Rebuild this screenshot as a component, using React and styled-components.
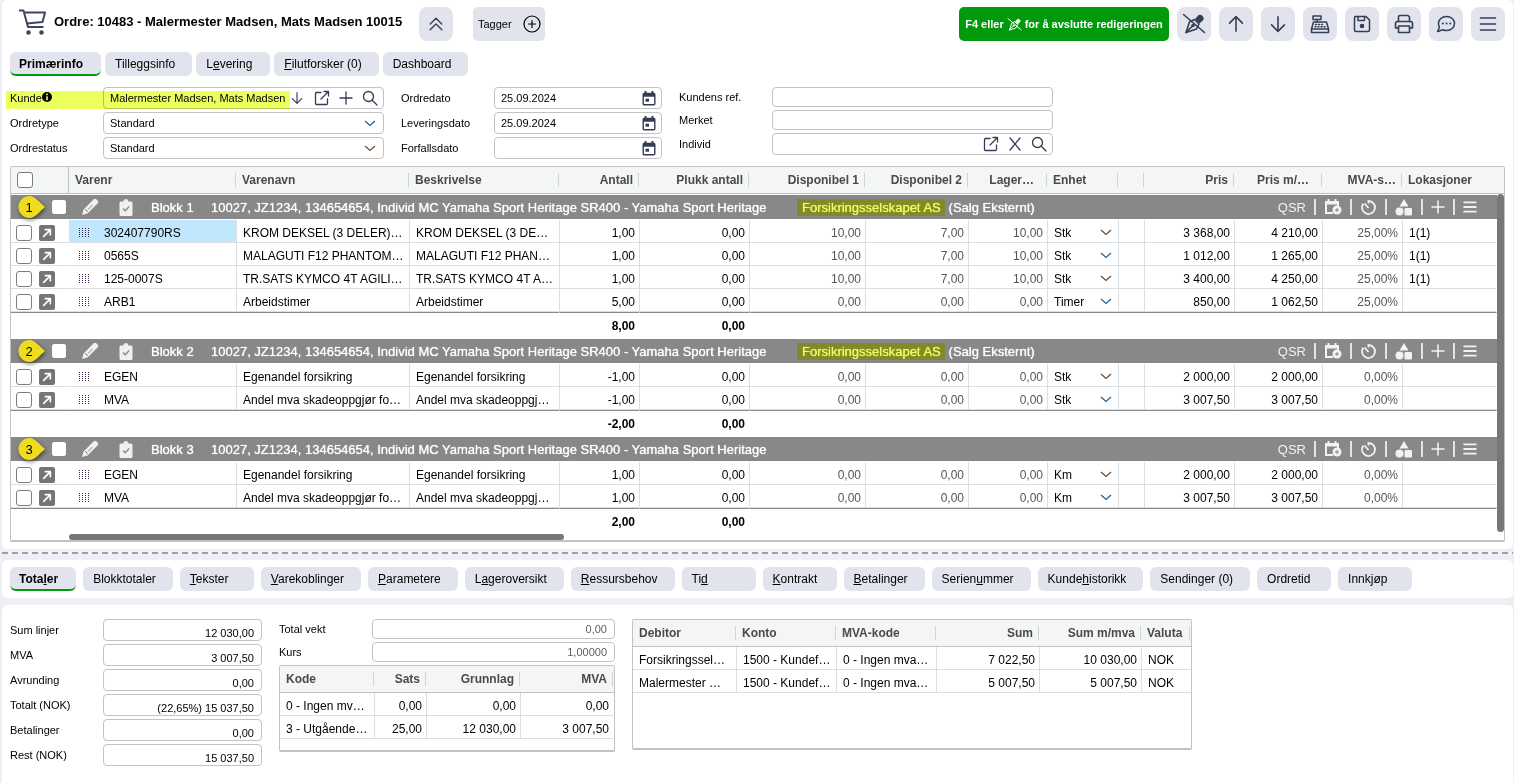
import React from "react";
import styled, { createGlobalStyle, css } from "styled-components";

const GlobalStyle = createGlobalStyle`
  * {
    box-sizing: border-box;
  }
  body {
    margin: 0;
    background: #eeeff4;
    color: #000;
    font-family: "Liberation Sans", Arial, sans-serif;
    font-size: 12px;
  }
  button, input, select {
    font-family: inherit;
    color: inherit;
  }
`;

const Page = styled.div`
  display: flex;
  flex-direction: column;
  min-height: 100vh;
  padding: 0 1px 0 2px;
`;

const Card = styled.section`
  background: #fff;
  border-radius: ${({ $last }) => ($last ? "5px 5px 0 0" : "5px")};
  padding: 7px 8px;
  ${({ $last }) =>
    $last &&
    css`
      flex: 1;
      margin-top: 7px;
      padding-top: 14px;
    `}
`;

const Splitter = styled.div`
  height: 2px;
  margin: 3px 0 6px;
  background: repeating-linear-gradient(
    90deg,
    #a0a0a4 0 6px,
    transparent 6px 10px
  );
`;

const Header = styled.header`
  display: flex;
  align-items: center;
  height: 34px;
`;

const CartBox = styled.span`
  display: flex;
  width: 44px;
  padding: 0 0 4px 9px;
`;

const Title = styled.h1`
  min-width: 359px;
  margin: 0 6px 4px 0;
  font-size: 13px;
  line-height: 16px;
  white-space: nowrap;
`;

const ToolButton = styled.button`
  display: flex;
  align-items: center;
  justify-content: center;
  width: 34px;
  height: 34px;
  padding: 0;
  border: 0;
  border-radius: 8px;
  background: #e1e4ec;
  color: #343d55;
  cursor: pointer;
`;

const TagButton = styled(ToolButton)`
  justify-content: space-between;
  width: 72px;
  margin-left: 20px;
  padding: 0 4px 0 5px;
  border-radius: 5px;
  font-size: 11px;
  color: #000;
`;

const Tools = styled.div`
  display: flex;
  gap: 8px;
  margin-left: auto;
`;

const EditBanner = styled.button`
  display: flex;
  align-items: center;
  justify-content: center;
  gap: 3px;
  min-width: 210px;
  height: 34px;
  padding: 0 5px;
  border: 0;
  border-radius: 5px;
  background: #009a0c;
  color: #fff;
  font-size: 11px;
  font-weight: bold;
  white-space: nowrap;
`;

const Tabs = styled.nav`
  display: flex;
  gap: ${({ $wide }) => ($wide ? "7px" : "4px")};
  ${({ $wide }) => !$wide && "margin: 11px 0;"}
`;

const Tab = styled.button`
  min-width: 74px;
  height: 24px;
  padding: 0 17px 0 10px;
  border: 0;
  border-radius: 6px;
  background: #e1e4ec;
  font-size: 12px;
  text-align: left;
  white-space: nowrap;
  ${({ $active }) =>
    $active &&
    css`
      min-width: 66px;
      padding: 2px 18px 0 9px;
      border-bottom: 2px solid #009a0c;
      font-weight: bold;
    `}
`;

const Form = styled.div`
  display: flex;
  gap: 17px;
  margin-bottom: 7px;
`;

const FormColumn = styled.div`
  display: flex;
  flex-direction: column;
  gap: 3px;
  width: ${({ $width }) => $width}px;
`;

const Row = styled.div`
  position: relative;
  display: flex;
  align-items: center;
`;

const Label = styled.label`
  flex: 0 0 93px;
  font-size: 11px;
  line-height: 14px;
  white-space: nowrap;
`;

const Field = styled.div`
  display: flex;
  flex: 1;
  align-items: center;
  min-width: 0;
  height: ${({ $low }) => ($low ? "20px" : "22px")};
  padding: 0 ${({ $number }) => ($number ? "7px" : "5px")} 0 6px;
  border: 1px solid #c3c3c3;
  border-radius: 4px;
  color: #343d55;
  background: #fff;
`;

const Input = styled.input`
  flex: 1;
  min-width: 0;
  height: 18px;
  padding: 0;
  border: 0;
  background: none;
  color: ${({ $muted }) => ($muted ? "#606060" : "#000")};
  font-size: 11px;
  text-align: ${({ $right }) => ($right ? "right" : "left")};
  outline: none;
  ${({ $sunk }) => $sunk && "padding-top: 6px;"}
`;

const Select = styled.select`
  flex: 1;
  min-width: 0;
  height: ${({ $cell }) => ($cell ? "16px" : "18px")};
  padding: 0;
  border: 0;
  appearance: none;
  background: none;
  color: #000;
  font-size: ${({ $cell }) => ($cell ? "12px" : "11px")};
  outline: none;
`;

const IconButton = styled.button`
  display: flex;
  padding: 0;
  border: 0;
  background: none;
  color: inherit;
`;

/* yellow marker pen over the customer row */
const Marker = styled.span`
  position: absolute;
  top: 4px;
  left: -4px;
  width: 284px;
  height: 18px;
  background: #ecff5c;
  mix-blend-mode: multiply;
  pointer-events: none;
`;

const InfoIcon = styled.svg`
  margin-bottom: 3px;
  vertical-align: middle;
`;

const Grid = styled.div`
  border: 1px solid #bdc3c7;
  border-bottom-width: 2px;
  border-radius: 2px;
  ${({ $height }) => $height && `height: ${$height}px;`}
  ${({ $width }) => $width && `width: ${$width}px;`}
`;

const GridBody = styled.div`
  display: flex;
`;

const Table = styled.table`
  flex: 1;
  width: 100%;
  min-width: 0;
  table-layout: fixed;
  border-collapse: separate;
  border-spacing: 0;
`;

const Th = styled.th`
  height: 27px;
  padding: 0;
  border-bottom: 1px solid #bdc3c7;
  background: #f4f6f6;
  color: #4a4a4a;
  font-size: 12px;
  text-align: ${({ $right }) => ($right ? "right" : "left")};
  ${({ $check }) => $check && "border-right: 1px solid #bdc3c7;"}
`;

const HeadText = styled.span`
  display: block;
  height: 14px;
  margin-right: 1px;
  padding: 0 ${({ $cut }) => ($cut ? "12px" : "5px")} 0
    ${({ $first }) => ($first ? "6px" : "5px")};
  border-right: 1px solid ${({ $end }) => ($end ? "transparent" : "#cfd4d7")};
  line-height: 14px;
  white-space: nowrap;
`;

const Td = styled.td`
  height: 23px;
  padding: 3px 4px 0 6px;
  border-right: 1px solid ${({ $plain }) => ($plain ? "transparent" : "#dcdfe2")};
  border-bottom: 1px solid #dcdfe2;
  background: ${({ $picked }) => ($picked ? "#c1e7ff" : "#fff")};
  color: ${({ $muted }) => ($muted ? "#555" : "#000")};
  font-size: 12px;
  line-height: 14px;
  text-align: ${({ $right }) => ($right ? "right" : "left")};
  white-space: nowrap;
  overflow: hidden;
`;

const CheckTd = styled(Td)`
  padding-left: 5px;
`;

const SumTd = styled.td`
  height: 26px;
  padding: 0 4px;
  border-top: 1px solid #8a8a8a;
  border-right: 1px solid transparent;
  font-weight: bold;
  text-align: right;
`;

const CellFlex = styled.div`
  display: flex;
  align-items: center;
  gap: ${({ $gap }) => $gap}px;
  padding: ${({ $pad }) => $pad || "0"};
`;

const CheckBox = styled.input`
  flex: none;
  width: ${({ $block }) => ($block ? "14px" : "16px")};
  height: ${({ $block }) => ($block ? "14px" : "16px")};
  margin: 0;
  border: 1px solid ${({ $block }) => ($block ? "#fff" : "#777d80")};
  border-radius: ${({ $block }) => ($block ? "2px" : "3px")};
  appearance: none;
  background: #fff;
`;

const OpenButton = styled.button`
  display: flex;
  align-items: center;
  justify-content: center;
  width: 16px;
  height: 16px;
  padding: 0;
  border: 0;
  border-radius: 2px;
  background: #757575;
  color: #fff;
`;

const BlockTd = styled.td`
  padding: 1px 0;
`;

const BlockBar = styled.div`
  display: flex;
  align-items: center;
  height: 24px;
  padding: 0 20px 0 6px;
  background: #888;
  color: #fff;
  font-size: 13px;
  white-space: nowrap;
`;

const BlockLead = styled.div`
  display: flex;
  align-items: center;
  width: 134px;
`;

const PinBox = styled.svg`
  flex: none;
  margin-right: 7px;
  overflow: visible;
`;

const PenSpace = styled.span`
  display: flex;
  margin: 0 20px 0 15px;
`;

const BlockText = styled.span`
  min-width: ${({ $width }) => $width}px;
  text-shadow: 0 0 1px #fff;
`;

const Highlight = styled.mark`
  min-width: 148px;
  margin-left: 11px;
  padding: 1px 0 1px 5px;
  background: #7f8a2b;
  color: #ecff5c;
  text-shadow: 0 0 1px #ecff5c;
`;

const BlockTools = styled.div`
  display: flex;
  align-items: center;
  gap: 8px;
  margin-left: auto;
  color: #f2f2f2;
`;

const Bar = styled.span`
  width: 2px;
  height: 16px;
  background: #e4e4e4;
`;

const ScrollColumn = styled.div`
  display: flex;
  flex-direction: column;
  width: 7px;
`;

const ScrollCorner = styled.div`
  height: 27px;
  border-bottom: 1px solid #bdc3c7;
  background: #f4f6f6;
`;

const ScrollThumb = styled.div`
  border-radius: 4px;
  background: #777;
  ${({ $across }) =>
    $across
      ? css`
          width: 495px;
          height: 6px;
          margin-left: 58px;
        `
      : css`
          flex: 1;
          margin-bottom: 2px;
        `}
`;

const Totals = styled.div`
  display: flex;
  align-items: flex-start;
  gap: 17px;
`;

const Icon = ({ size = 20, box = 24, width = 2, children }) => (
  <svg
    width={size}
    height={size}
    viewBox={`0 0 ${box} ${box}`}
    fill="none"
    stroke="currentColor"
    strokeWidth={width}
    strokeLinecap="round"
    strokeLinejoin="round"
    aria-hidden="true"
  >
    {children}
  </svg>
);

const CartIcon = () => (
  <svg width="28" height="26" viewBox="0 0 28 26" fill="none" stroke="#3d465c" strokeWidth="2" strokeLinejoin="round" aria-hidden="true">
    <path d="M0 1.5h4.500l4.500 16.500h15.500" />
    <path d="M5.500 3.500h20.500l-2.500 9.500-15.500 1.500" />
    <circle cx="9.500" cy="23.500" r="1.300" fill="#3d465c" />
    <circle cx="22.500" cy="23.500" r="1.300" fill="#3d465c" />
  </svg>
);

const PenSlash = ({ size = 24 }) => (
  <Icon size={size} width={1.6}>
    <path d="M4 20.500 7.500 10l5-2.500 4.500 4.500-2.500 5Z" />
    <path d="m4 20.500 6.500-6.500" />
    <circle cx="11" cy="13.500" r="1" fill="currentColor" />
    <path d="m14 7 3-3.200c2-1 4.700 1.700 3.700 3.700L17.500 10.500Z" fill="currentColor" />
    <path d="M1.500 2.500 22.500 20.500" />
  </Icon>
);

const ArrowIcon = ({ down, size = 22 }) => (
  <Icon size={size} width={1.7}>
    {down ? <path d="M12 4v16M5 13l7 7 7-7" /> : <path d="M12 20V4M5 11l7-7 7 7" />}
  </Icon>
);

const RegisterIcon = () => (
  <Icon size={20} box={20} width={1.5}>
    <path d="M3 2h8v3.500H3zM7 5.500V8" />
    <path d="M3.500 8h13l2 7H1.500zM1.500 15h17v3.500h-17z" />
    <path d="M5.500 10.500h9M5 12.800h10" strokeDasharray="1 2" />
  </Icon>
);

const SaveIcon = () => (
  <Icon size={18} box={18} width={1.5}>
    <path d="M2.500 1.500h10.500l3.500 3.500v10a1.500 1.500 0 0 1-1.500 1.500H3A1.500 1.500 0 0 1 1.500 15V3a1.500 1.500 0 0 1 1-1.500Z" />
    <path d="M5 1.500v4h6.500v-4" />
    <circle cx="9" cy="11" r="1.600" fill="currentColor" />
  </Icon>
);

const PrintIcon = () => (
  <Icon size={20} box={20} width={1.6}>
    <path d="M4.500 7.500V3A1.500 1.500 0 0 1 6 1.500h8L15.500 3v4.500" />
    <path d="M4.500 14H1.500v-4.500a2 2 0 0 1 2-2h13a2 2 0 0 1 2 2V14h-3" />
    <path d="M4.500 12h11v6.500h-11z" />
  </Icon>
);

const ChatIcon = () => (
  <Icon size={20} box={20} width={1.5}>
    <path d="M10.500 2.500c4.600 0 8 3 8 7s-3.400 7-8 7c-1.300 0-2.600-.3-3.700-.8L1.500 17.500l2-4.200A6.600 6.600 0 0 1 2.500 9.500c0-4 3.400-7 8-7Z" />
    <path d="M6.800 9.500h.1M10.500 9.500h.1M14.200 9.500h.1" strokeWidth="2" />
  </Icon>
);

const MenuIcon = ({ size = 18, width = 2 }) => (
  <Icon size={size} box={18} width={width}>
    <path d="M1.500 3h15M1.500 9h15M1.500 15h15" />
  </Icon>
);

const OpenIcon = () => (
  <Icon size={16} box={16} width={1.3}>
    <path d="M7 2.500H2.500A1 1 0 0 0 1.500 3.500v10a1 1 0 0 0 1 1h10a1 1 0 0 0 1-1V9M10 1.500h4.500V6M14.500 1.500 7 9" />
  </Icon>
);

const PlusIcon = ({ size = 14, width = 1.3 }) => (
  <Icon size={size} box={14} width={width}>
    <path d="M7 1v12M1 7h12" />
  </Icon>
);

const CrossIcon = () => (
  <Icon size={14} box={14} width={1.3}>
    <path d="m2 1 10 12M12 1 2 13" />
  </Icon>
);

const SearchIcon = () => (
  <Icon size={16} box={16} width={1.3}>
    <circle cx="6.500" cy="6.500" r="5" />
    <path d="m10.500 10.500 4.500 4.500" />
  </Icon>
);

const CalendarIcon = () => (
  <svg width="14" height="15" viewBox="0 0 14 15" fill="none" stroke="currentColor" aria-hidden="true">
    <path d="M3.500 0v3M10.500 0v3" strokeWidth="2" />
    <rect x="1.200" y="2.500" width="11.600" height="11.300" rx="1" strokeWidth="1.400" />
    <path d="M1 4h12" strokeWidth="3.500" />
    <path d="M3.500 9.200h3.500" strokeWidth="3" />
  </svg>
);

const Chevron = ({ color = "#2b5876" }) => (
  <svg width="12" height="7" viewBox="0 0 12 7" fill="none" stroke={color} strokeWidth="1.200" aria-hidden="true">
    <path d="m1 1 5 4.500 5-4.500" />
  </svg>
);

const DragDots = () => (
  <svg width="12" height="9" viewBox="0 0 12 9" stroke="#3c2350" strokeWidth="1" strokeDasharray="1 1" aria-hidden="true">
    <path d="M1.500 0v9M4.500 0v9M7.500 0v9M10.500 0v9" />
  </svg>
);

const Pin = ({ number }) => (
  <PinBox width="28" height="24" viewBox="0 0 28 24">
    <path
      d="M28 12C22 17 18 23 12.500 23a11 11 0 1 1 0-22C18 1 22 7 28 12Z"
      fill="#f0dc1e"
      style={{ filter: "drop-shadow(1px 2px 2px rgba(0, 0, 0, 0.5))" }}
    />
    <text x="12" y="17" fontSize="13" textAnchor="middle" fill="#000">
      {number}
    </text>
  </PinBox>
);

const BlockPen = () => (
  <svg width="18" height="18" viewBox="0 0 18 18" aria-hidden="true">
    <path d="M1 17 2.500 11.500 12.500 1.500a2 2 0 0 1 3 0l1 1a2 2 0 0 1 0 3L6.500 15.500Z" fill="#f0f0f0" />
    <path d="m7 11.500 4.500-4.500M4 11l3 3" stroke="#888" fill="none" />
  </svg>
);

const ClipboardIcon = () => (
  <svg width="14" height="17" viewBox="0 0 14 17" aria-hidden="true">
    <path d="M2 2.500h2.500a2.500 2.500 0 0 1 5 0H12A1.500 1.500 0 0 1 13.500 4v11.500A1.500 1.500 0 0 1 12 17H2A1.500 1.500 0 0 1 .5 15.500V4A1.500 1.500 0 0 1 2 2.500Z" fill="#f0f0f0" />
    <path d="m4 9.500 2.200 2.200L10.200 7.500" stroke="#888" strokeWidth="1.300" fill="none" />
  </svg>
);

const PlanIcon = () => (
  <svg width="18" height="16" viewBox="0 0 18 16" fill="none" stroke="currentColor" aria-hidden="true">
    <path d="M4.500 0v4M11.500 0v4" strokeWidth="2" />
    <path d="M9 14H2V3h12v4" strokeWidth="2" />
    <path d="M1.500 4h13" strokeWidth="3" />
    <circle cx="13" cy="11" r="4.500" fill="currentColor" stroke="none" />
    <path d="M13 9v4M11 11h4" stroke="#888" />
  </svg>
);

const TimerIcon = () => (
  <svg width="17" height="17" viewBox="0 0 17 17" fill="none" stroke="currentColor" strokeWidth="1.800" aria-hidden="true">
    <path d="M8.500 4.500V2a6.500 6.500 0 1 1-5.200 2.600" />
    <path d="m4.500 4.500 4 4.500" />
  </svg>
);

const ShapesIcon = () => (
  <svg width="18" height="17" viewBox="0 0 18 17" fill="currentColor" aria-hidden="true">
    <path d="m9 0 4.500 7.500h-9Z" />
    <circle cx="4.500" cy="12.500" r="4" />
    <rect x="9.500" y="9" width="7.500" height="7.500" rx="1" />
  </svg>
);

const mainTabs = [
  ["Primærinfo", ""],
  ["Tilleggsinfo", "g", 6],
  ["Levering", "e", 1],
  ["Filutforsker (0)", "F", 0],
  ["Dashboard", ""],
];

const bottomTabs = [
  ["Totaler", "l", 4],
  ["Blokktotaler", ""],
  ["Tekster", "T", 0],
  ["Varekoblinger", "V", 0],
  ["Parametere", "P", 0],
  ["Lageroversikt", "a", 1],
  ["Ressursbehov", "R", 0],
  ["Tid", "d", 2],
  ["Kontrakt", "K", 0],
  ["Betalinger", "B", 0],
  ["Serienummer", "u", 6],
  ["Kundehistorikk", "h", 5],
  ["Sendinger (0)", ""],
  ["Ordretid", ""],
  ["Innkjøp", ""],
];

const columns = [
  { label: "Varenr", width: 168 },
  { label: "Varenavn", width: 173 },
  { label: "Beskrivelse", width: 150 },
  { label: "Antall", width: 80, right: true },
  { label: "Plukk antall", width: 110, right: true },
  { label: "Disponibel 1", width: 116, right: true },
  { label: "Disponibel 2", width: 103, right: true },
  { label: "Lager…", width: 79, right: true, cut: true },
  { label: "Enhet", width: 71 },
  { label: "", width: 26 },
  { label: "Pris", width: 90, right: true },
  { label: "Pris m/…", width: 88, right: true, cut: true },
  { label: "MVA-s…", width: 80, right: true },
  { label: "Lokasjoner", end: true },
];

const vehicle =
  "10027, JZ1234, 134654654, Individ MC Yamaha Sport Heritage SR400 - Yamaha Sport Heritage";

const blocks = [
  {
    insurer: "Forsikringsselskapet AS",
    sum: "8,00",
    rows: [
      ["302407790RS", "KROM DEKSEL (3 DELER)…", "KROM DEKSEL (3 DE…", "1,00", "0,00", "10,00", "7,00", "10,00", "Stk", "3 368,00", "4 210,00", "25,00%", "1(1)"],
      ["0565S", "MALAGUTI F12 PHANTOM…", "MALAGUTI F12 PHAN…", "1,00", "0,00", "10,00", "7,00", "10,00", "Stk", "1 012,00", "1 265,00", "25,00%", "1(1)"],
      ["125-0007S", "TR.SATS KYMCO 4T AGILI…", "TR.SATS KYMCO 4T A…", "1,00", "0,00", "10,00", "7,00", "10,00", "Stk", "3 400,00", "4 250,00", "25,00%", "1(1)"],
      ["ARB1", "Arbeidstimer", "Arbeidstimer", "5,00", "0,00", "0,00", "0,00", "0,00", "Timer", "850,00", "1 062,50", "25,00%", ""],
    ],
  },
  {
    insurer: "Forsikringsselskapet AS",
    sum: "-2,00",
    rows: [
      ["EGEN", "Egenandel forsikring", "Egenandel forsikring", "-1,00", "0,00", "0,00", "0,00", "0,00", "Stk", "2 000,00", "2 000,00", "0,00%", ""],
      ["MVA", "Andel mva skadeoppgjør fo…", "Andel mva skadeoppgj…", "-1,00", "0,00", "0,00", "0,00", "0,00", "Stk", "3 007,50", "3 007,50", "0,00%", ""],
    ],
  },
  {
    sum: "2,00",
    rows: [
      ["EGEN", "Egenandel forsikring", "Egenandel forsikring", "1,00", "0,00", "0,00", "0,00", "0,00", "Km", "2 000,00", "2 000,00", "0,00%", ""],
      ["MVA", "Andel mva skadeoppgjør fo…", "Andel mva skadeoppgj…", "1,00", "0,00", "0,00", "0,00", "0,00", "Km", "3 007,50", "3 007,50", "0,00%", ""],
    ],
  },
];

const sums = [
  ["Sum linjer", "12 030,00"],
  ["MVA", "3 007,50"],
  ["Avrunding", "0,00"],
  ["Totalt (NOK)", "(22,65%) 15 037,50"],
  ["Betalinger", "0,00"],
  ["Rest (NOK)", "15 037,50"],
];

const vatColumns = [
  { label: "Kode", width: 95 },
  { label: "Sats", width: 52, right: true },
  { label: "Grunnlag", width: 94, right: true },
  { label: "MVA", right: true },
];

const vatRows = [
  ["0 - Ingen mv…", "0,00", "0,00", "0,00"],
  ["3 - Utgående…", "25,00", "12 030,00", "3 007,50"],
];

const debtorColumns = [
  { label: "Debitor", width: 104 },
  { label: "Konto", width: 100 },
  { label: "MVA-kode", width: 100 },
  { label: "Sum", width: 103, right: true },
  { label: "Sum m/mva", width: 102, right: true },
  { label: "Valuta" },
];

const debtorRows = [
  ["Forsikringssel…", "1500 - Kundef…", "0 - Ingen mva…", "7 022,50", "10 030,00", "NOK"],
  ["Malermester …", "1500 - Kundef…", "0 - Ingen mva…", "5 007,50", "5 007,50", "NOK"],
];

const TabBar = ({ tabs, wide }) => (
  <Tabs $wide={wide}>
    {tabs.map(([name, key, at], i) => (
      <Tab key={name} type="button" $active={i === 0}>
        {key ? (
          <>
            {name.slice(0, at)}
            <u>{key}</u>
            {name.slice(at + 1)}
          </>
        ) : (
          name
        )}
      </Tab>
    ))}
  </Tabs>
);

const SelectRow = ({ id, label, color }) => (
  <Row>
    <Label htmlFor={id}>{label}</Label>
    <Field $number>
      <Select id={id} defaultValue="Standard">
        <option>Standard</option>
      </Select>
      <Chevron color={color} />
    </Field>
  </Row>
);

const DateRow = ({ id, label, value }) => (
  <Row>
    <Label htmlFor={id}>{label}</Label>
    <Field>
      <Input id={id} defaultValue={value} />
      <IconButton type="button" aria-label="Velg dato">
        <CalendarIcon />
      </IconButton>
    </Field>
  </Row>
);

const Heads = ({ items }) =>
  items.map(({ label, right, cut, end }, i) => (
    <Th key={i} $right={right}>
      <HeadText $cut={cut} $end={end} $first={i === 0}>
        {label}
      </HeadText>
    </Th>
  ));

const Cols = ({ items }) =>
  items.map(({ width }, i) => <col key={i} style={width && { width }} />);

const SmallTable = ({ items, rows, height, width }) => (
  <Grid $height={height} $width={width}>
    <Table>
      <colgroup>
        <Cols items={items} />
      </colgroup>
      <thead>
        <tr>
          <Heads items={items} />
        </tr>
      </thead>
      <tbody>
        {rows.map((row) => (
          <tr key={row[0]}>
            {row.map((value, i) => (
              <Td key={i} $right={items[i].right} $plain={i === row.length - 1}>
                {value}
              </Td>
            ))}
          </tr>
        ))}
      </tbody>
    </Table>
  </Grid>
);

const ItemRow = ({ row, picked, color }) => {
  const [nr, name, text, count, pick, free1, free2, stock, unit, price, gross, vat, place] = row;

  return (
    <tr>
      <CheckTd $plain>
        <CellFlex $gap={7}>
          <CheckBox type="checkbox" aria-label={`Velg ${nr}`} />
          <OpenButton type="button" aria-label={`Åpne ${nr}`}>
            <Icon size={10} box={12} width={2}>
              <path d="M2 10 9.500 2.500M4 2h6v6" />
            </Icon>
          </OpenButton>
        </CellFlex>
      </CheckTd>
      <Td $picked={picked}>
        <CellFlex $gap={14} $pad="0 0 0 3px">
          <DragDots />
          {nr}
        </CellFlex>
      </Td>
      <Td>{name}</Td>
      <Td>{text}</Td>
      <Td $right>{count}</Td>
      <Td $right>{pick}</Td>
      <Td $right $muted>{free1}</Td>
      <Td $right $muted>{free2}</Td>
      <Td $right $muted>{stock}</Td>
      <Td>
        <CellFlex $gap={4} $pad="0 2px 0 0">
          <Select $cell aria-label={`Enhet ${nr}`} defaultValue={unit}>
            <option>{unit}</option>
          </Select>
          <Chevron color={color} />
        </CellFlex>
      </Td>
      <Td />
      <Td $right>{price}</Td>
      <Td $right>{gross}</Td>
      <Td $right $muted>{vat}</Td>
      <Td $plain>{place}</Td>
    </tr>
  );
};

const Block = ({ block, number }) => (
  <tbody>
    <tr>
      <BlockTd colSpan={15}>
        <BlockBar>
          <BlockLead>
            <Pin number={number} />
            <CheckBox $block type="checkbox" aria-label={`Velg blokk ${number}`} />
            <PenSpace>
              <BlockPen />
            </PenSpace>
            <ClipboardIcon />
          </BlockLead>
          <BlockText $width={60}>Blokk {number}</BlockText>
          <BlockText $width={575}>{vehicle}</BlockText>
          {block.insurer && (
            <>
              <Highlight>{block.insurer}</Highlight>
              <BlockText $width={90}>&nbsp;(Salg Eksternt)</BlockText>
            </>
          )}
          <BlockTools>
            <span>QSR</span>
            <Bar />
            <PlanIcon />
            <Bar />
            <TimerIcon />
            <Bar />
            <ShapesIcon />
            <Bar />
            <PlusIcon width={1.6} />
            <Bar />
            <MenuIcon size={14} width={2.400} />
          </BlockTools>
        </BlockBar>
      </BlockTd>
    </tr>
    {block.rows.map((row, i) => (
      <ItemRow
        key={row[0]}
        row={row}
        picked={number === 1 && i === 0}
        color={i % 2 ? "#1f5f8f" : "#6b4a2b"}
      />
    ))}
    <tr>
      <SumTd colSpan={4} />
      <SumTd>{block.sum}</SumTd>
      <SumTd>0,00</SumTd>
      <SumTd colSpan={9} />
    </tr>
  </tbody>
);

const App = () => (
  <>
    <GlobalStyle />
    <Page>
      <Card>
        <Header>
          <CartBox>
            <CartIcon />
          </CartBox>
          <Title>Ordre: 10483 - Malermester Madsen, Mats Madsen 10015</Title>
          <ToolButton type="button" aria-label="Skjul">
            <Icon size={20} width={1.6}>
              <path d="m5 12 7-7 7 7M5 19l7-7 7 7" />
            </Icon>
          </ToolButton>
          <TagButton type="button">
            Tagger
            <Icon size={18} box={18} width={1.2}>
              <circle cx="9" cy="9" r="8" />
              <path d="M9 5.500v7M5.500 9h7" />
            </Icon>
          </TagButton>
          <Tools>
            <EditBanner type="button">
              F4 eller <PenSlash size={15} /> for å avslutte redigeringen
            </EditBanner>
            <ToolButton type="button" aria-label="Avslutt redigering">
              <PenSlash />
            </ToolButton>
            <ToolButton type="button" aria-label="Forrige">
              <ArrowIcon />
            </ToolButton>
            <ToolButton type="button" aria-label="Neste">
              <ArrowIcon down />
            </ToolButton>
            <ToolButton type="button" aria-label="Kasse">
              <RegisterIcon />
            </ToolButton>
            <ToolButton type="button" aria-label="Lagre">
              <SaveIcon />
            </ToolButton>
            <ToolButton type="button" aria-label="Skriv ut">
              <PrintIcon />
            </ToolButton>
            <ToolButton type="button" aria-label="Meldinger">
              <ChatIcon />
            </ToolButton>
            <ToolButton type="button" aria-label="Meny">
              <MenuIcon width={1.6} />
            </ToolButton>
          </Tools>
        </Header>

        <TabBar tabs={mainTabs} />

        <Form>
          <FormColumn $width={374}>
            <Row>
              <Label htmlFor="kunde">
                Kunde
                <InfoIcon width="10" height="10" viewBox="0 0 10 10" aria-hidden="true">
                  <circle cx="5" cy="5" r="5" />
                  <path d="M5 1.500v1.700M5 4.200v4" stroke="#fff" strokeWidth="1.600" />
                </InfoIcon>
              </Label>
              <Field>
                <Input id="kunde" defaultValue="Malermester Madsen, Mats Madsen" />
                <CellFlex $gap={9}>
                  <IconButton type="button" aria-label="Hent">
                    <ArrowIcon down size={16} />
                  </IconButton>
                  <IconButton type="button" aria-label="Åpne">
                    <OpenIcon />
                  </IconButton>
                  <IconButton type="button" aria-label="Ny">
                    <PlusIcon />
                  </IconButton>
                  <IconButton type="button" aria-label="Søk">
                    <SearchIcon />
                  </IconButton>
                </CellFlex>
              </Field>
              <Marker />
            </Row>
            <SelectRow id="ordretype" label="Ordretype" color="#1f5f8f" />
            <SelectRow id="ordrestatus" label="Ordrestatus" color="#6b4a2b" />
          </FormColumn>
          <FormColumn $width={261}>
            <DateRow id="ordredato" label="Ordredato" value="25.09.2024" />
            <DateRow id="leveringsdato" label="Leveringsdato" value="25.09.2024" />
            <DateRow id="forfallsdato" label="Forfallsdato" value="" />
          </FormColumn>
          <FormColumn $width={374}>
            <Row>
              <Label htmlFor="ref">Kundens ref.</Label>
              <Field $low>
                <Input id="ref" />
              </Field>
            </Row>
            <Row>
              <Label htmlFor="merket">Merket</Label>
              <Field $low>
                <Input id="merket" />
              </Field>
            </Row>
            <Row>
              <Label htmlFor="individ">Individ</Label>
              <Field>
                <Input id="individ" />
                <CellFlex $gap={9}>
                  <IconButton type="button" aria-label="Åpne individ">
                    <OpenIcon />
                  </IconButton>
                  <IconButton type="button" aria-label="Fjern individ">
                    <CrossIcon />
                  </IconButton>
                  <IconButton type="button" aria-label="Søk individ">
                    <SearchIcon />
                  </IconButton>
                </CellFlex>
              </Field>
            </Row>
          </FormColumn>
        </Form>

        <Grid>
          <GridBody>
            <Table>
              <colgroup>
                <col style={{ width: 58 }} />
                <Cols items={columns} />
              </colgroup>
              <thead>
                <tr>
                  <Th $check>
                    <CellFlex $gap={0} $pad="0 0 0 6px">
                      <CheckBox type="checkbox" aria-label="Velg alle" />
                    </CellFlex>
                  </Th>
                  <Heads items={columns} />
                </tr>
              </thead>
              {blocks.map((block, i) => (
                <Block key={i} block={block} number={i + 1} />
              ))}
            </Table>
            <ScrollColumn>
              <ScrollCorner />
              <ScrollThumb />
            </ScrollColumn>
          </GridBody>
          <ScrollThumb $across />
        </Grid>
      </Card>

      <Splitter />

      <Card>
        <TabBar tabs={bottomTabs} wide />
      </Card>

      <Card $last>
        <Totals>
          <FormColumn $width={252}>
            {sums.map(([label, value], i) => (
              <Row key={label}>
                <Label htmlFor={`sum${i}`}>{label}</Label>
                <Field $number>
                  <Input id={`sum${i}`} defaultValue={value} readOnly $right $sunk />
                </Field>
              </Row>
            ))}
          </FormColumn>
          <FormColumn $width={336}>
            <Row>
              <Label htmlFor="vekt">Total vekt</Label>
              <Field $low $number>
                <Input id="vekt" defaultValue="0,00" $right $muted />
              </Field>
            </Row>
            <Row>
              <Label htmlFor="kurs">Kurs</Label>
              <Field $low $number>
                <Input id="kurs" defaultValue="1,00000" $right $muted />
              </Field>
            </Row>
            <SmallTable items={vatColumns} rows={vatRows} height={87} />
          </FormColumn>
          <SmallTable items={debtorColumns} rows={debtorRows} height={131} width={560} />
        </Totals>
      </Card>
    </Page>
  </>
);

export default App;
